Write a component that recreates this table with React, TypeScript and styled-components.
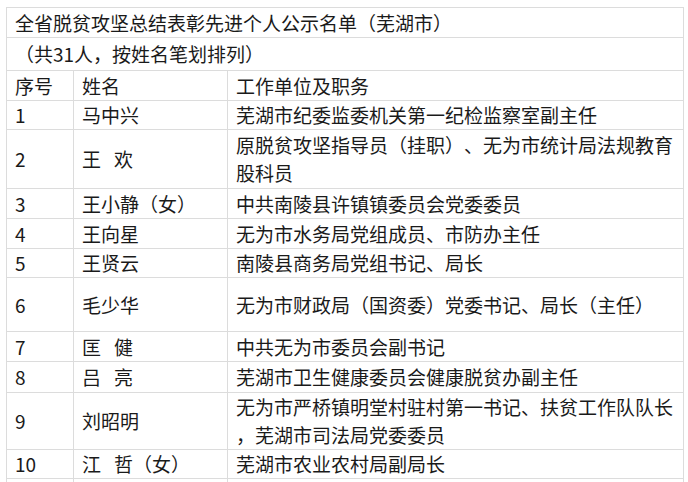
import React from "react";
import styled, { createGlobalStyle } from "styled-components";

const GlobalStyle = createGlobalStyle`
  html, body {
    margin: 0;
    padding: 0;
    background: #ffffff;
  }
  body {
    font-family: "Microsoft YaHei", "Noto Sans CJK SC", sans-serif;
    color: #1a1a1a;
  }
`;

interface Person {
  no: string;
  name: string[];
  job: string[];
  height: number;
}

const people: Person[] = [
  { no: "1", name: ["马中兴"], job: ["芜湖市纪委监委机关第一纪检监察室副主任"], height: 29 },
  {
    no: "2",
    name: ["王", "欢"],
    job: ["原脱贫攻坚指导员（挂职）、无为市统计局法规教育", "股科员"],
    height: 59,
  },
  { no: "3", name: ["王小静（女）"], job: ["中共南陵县许镇镇委员会党委委员"], height: 30 },
  { no: "4", name: ["王向星"], job: ["无为市水务局党组成员、市防办主任"], height: 30 },
  { no: "5", name: ["王贤云"], job: ["南陵县商务局党组书记、局长"], height: 29 },
  { no: "6", name: ["毛少华"], job: ["无为市财政局（国资委）党委书记、局长（主任）"], height: 54 },
  { no: "7", name: ["匡", "健"], job: ["中共无为市委员会副书记"], height: 30 },
  { no: "8", name: ["吕", "亮"], job: ["芜湖市卫生健康委员会健康脱贫办副主任"], height: 31 },
  {
    no: "9",
    name: ["刘昭明"],
    job: ["无为市严桥镇明堂村驻村第一书记、扶贫工作队队长", "，芜湖市司法局党委委员"],
    height: 57,
  },
  { no: "10", name: ["江", "哲（女）"], job: ["芜湖市农业农村局副局长"], height: 29 },
  { no: "", name: [""], job: [""], height: 30 },
];

const Page = styled.div`
  padding: 7px 0 0 6px;
`;

const Table = styled.table`
  width: 677px;
  border-collapse: collapse;
  table-layout: fixed;
  font-size: 19px;
  line-height: 28px;
  text-spacing-trim: space-all;
`;

const Row = styled.tr<{ $h: number }>`
  height: ${({ $h }) => $h}px;
`;

const Cell = styled.td`
  border: 1px solid #dcdcdc;
  padding: 0 8px;
  vertical-align: middle;
  white-space: nowrap;
  overflow: hidden;
`;

const NameGap = styled.span`
  display: inline-block;
  width: 13px;
`;

const App = () => {
  return (
    <Page>
      <GlobalStyle />
      <Table>
        <colgroup>
          <col style={{ width: 67 }} />
          <col style={{ width: 154 }} />
          <col style={{ width: 456 }} />
        </colgroup>
        <tbody>
          <Row $h={30}>
            <Cell colSpan={3}>全省脱贫攻坚总结表彰先进个人公示名单（芜湖市）</Cell>
          </Row>
          <Row $h={33}>
            <Cell colSpan={3}>（共31人，按姓名笔划排列）</Cell>
          </Row>
          <Row $h={30}>
            <Cell>序号</Cell>
            <Cell>姓名</Cell>
            <Cell>工作单位及职务</Cell>
          </Row>
          {people.map((p, i) => (
            <Row key={i} $h={p.height}>
              <Cell>{p.no}</Cell>
              <Cell>
                {p.name.map((part, j) => (
                  <React.Fragment key={j}>
                    {j > 0 && <NameGap />}
                    {part}
                  </React.Fragment>
                ))}
              </Cell>
              <Cell>
                {p.job.map((line, j) => (
                  <React.Fragment key={j}>
                    {j > 0 && <br />}
                    {line}
                  </React.Fragment>
                ))}
              </Cell>
            </Row>
          ))}
        </tbody>
      </Table>
    </Page>
  );
};

export default App;
